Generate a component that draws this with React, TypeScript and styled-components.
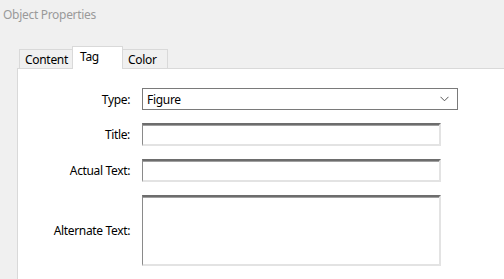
import React from "react";
import styled, { createGlobalStyle } from "styled-components";

const Global = createGlobalStyle`
  html, body { margin: 0; padding: 0; background: #f0f0f0; }
  body { font-family: "Noto Sans", "Open Sans", sans-serif; font-size: 12px; color: #000; }
  * { box-sizing: border-box; }
`;

const Window = styled.div`
  width: 504px;
  height: 279px;
  display: flex;
  flex-direction: column;
  background: #f0f0f0;
  overflow: hidden;
`;

const TitleBar = styled.div`
  height: 28px;
  padding-left: 3px;
  display: flex;
  align-items: center;
  color: #9a9a9a;
  font-size: 12px;
  letter-spacing: -0.3px;
`;

const Body = styled.div`
  flex: 1;
  display: flex;
  flex-direction: column;
  padding: 18px 0 0 17px;
`;

const TabStrip = styled.div`
  display: flex;
  align-items: flex-end;
  padding-left: 2px;
  height: 23px;
  position: relative;
  z-index: 1;
  margin-bottom: -1px;
`;

const Tab = styled.div<{ $active?: boolean; $first?: boolean; $last?: boolean; $w: number }>`
  width: ${(p) => p.$w}px;
  height: ${(p) => (p.$active ? 23 : 20)}px;
  padding: 0 0 0 ${(p) => (p.$active ? 7 : 5)}px;
  display: flex;
  align-items: ${(p) => (p.$active ? "flex-start" : "center")};
  padding-top: ${(p) => (p.$active ? 1 : 0)}px;
  background: ${(p) => (p.$active ? "#ffffff" : "#f0f0f0")};
  border-top: 1px solid #d9d9d9;
  border-left: ${(p) => (p.$active || p.$first ? "1px solid #d9d9d9" : "none")};
  border-right: ${(p) => (p.$active || p.$last ? "1px solid #d9d9d9" : "none")};
  border-bottom: ${(p) => (p.$active ? "none" : "1px solid #d9d9d9")};
  letter-spacing: -0.3px;
  white-space: nowrap;
`;

const Panel = styled.div`
  flex: 1;
  background: #ffffff;
  border-top: 1px solid #d9d9d9;
  border-left: 1px solid #d9d9d9;
  padding: 19px 0 0 0;
`;

const Form = styled.div`
  display: grid;
  grid-template-columns: 112px auto;
  column-gap: 12px;
  row-gap: 13px;
  align-items: center;
  justify-content: start;
`;

const Label = styled.div`
  text-align: right;
  letter-spacing: -0.35px;
  white-space: nowrap;
`;

const Select = styled.div`
  width: 316px;
  height: 22px;
  border: 1px solid #7a7a7a;
  background: #fff;
  display: flex;
  align-items: center;
  justify-content: space-between;
  padding: 0 8px 0 4px;
  letter-spacing: -0.3px;
`;

const Field = styled.div<{ $h: number }>`
  width: 299px;
  height: ${(p) => p.$h}px;
  background: #fff;
  border-top: 2px solid #6d6d6d;
  border-left: 1px solid #8a8a8a;
  border-right: 2px solid #e3e3e3;
  border-bottom: 2px solid #e3e3e3;
  box-shadow: inset 0 1px 0 #a0a0a0;
`;

const Chevron = () => (
  <svg width="9" height="6" viewBox="0 0 9 6">
    <path d="M0.5 0.8 L4.5 4.8 L8.5 0.8" fill="none" stroke="#555" strokeWidth="1" />
  </svg>
);

export default function App() {
  return (
    <>
      <Global />
      <Window>
        <TitleBar>Object Properties</TitleBar>
        <Body>
          <TabStrip>
            <Tab $first $w={53}>Content</Tab>
            <Tab $active $w={51}>Tag</Tab>
            <Tab $last $w={45}>Color</Tab>
          </TabStrip>
          <Panel>
            <Form>
              <Label>Type:</Label>
              <Select>
                <span>Figure</span>
                <Chevron />
              </Select>
              <Label>Title:</Label>
              <Field $h={23} />
              <Label>Actual Text:</Label>
              <Field $h={23} />
              <Label>Alternate Text:</Label>
              <Field $h={71} />
            </Form>
          </Panel>
        </Body>
      </Window>
    </>
  );
}
